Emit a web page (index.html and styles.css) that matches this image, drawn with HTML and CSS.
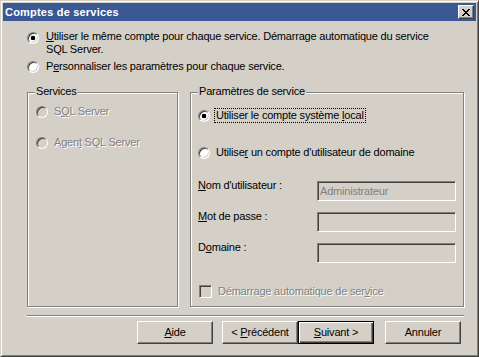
FILE: index.html
```html
<!DOCTYPE html>
<html lang="fr">
<head>
<meta charset="utf-8">
<title>Comptes de services</title>
<link rel="stylesheet" href="styles.css">
</head>
<body>
<div class="window">
  <div class="titlebar">
    <span class="title">Comptes de services</span>
    <span class="close-btn">
      <svg width="8" height="7" viewBox="0 0 8 7" shape-rendering="crispEdges"><path fill="#000" d="M0 0h2v1H0z M6 0h2v1H6z M1 1h2v1H1z M5 1h2v1H5z M2 2h4v1H2z M3 3h2v1H3z M2 4h4v1H2z M1 5h2v1H1z M5 5h2v1H5z M0 6h2v1H0z M6 6h2v1H6z"/></svg>
    </span>
  </div>
  <div class="body">
    <div class="option first">
      <span class="radio checked"></span>
      <span class="label"><u>U</u>tiliser le même compte pour chaque service. Démarrage automatique du service<br>SQL Server.</span>
    </div>
    <div class="option second">
      <span class="radio"></span>
      <span class="label">P<u>e</u>rsonnaliser les paramètres pour chaque service.</span>
    </div>
    <div class="groups">
      <div class="group services">
        <span class="legend">Services</span>
        <div class="svc-row disabled"><span class="radio off"></span><span>S<u>Q</u>L Server</span></div>
        <div class="svc-row disabled"><span class="radio off"></span><span>Agen<u>t</u> SQL Server</span></div>
      </div>
      <div class="group params">
        <span class="legend">Paramètres de service</span>
        <div class="prm-radio local"><span class="radio checked"></span><span class="focus">Utiliser le compte système <u>l</u>ocal</span></div>
        <div class="prm-radio domain"><span class="radio"></span><span>Utilise<u>r</u> un compte d'utilisateur de domaine</span></div>
        <div class="field first-field"><span class="field-label"><u>N</u>om d'utilisateur :</span><span class="textbox">Administrateur</span></div>
        <div class="field"><span class="field-label"><u>M</u>ot de passe :</span><span class="textbox"></span></div>
        <div class="field"><span class="field-label">D<u>o</u>maine :</span><span class="textbox"></span></div>
        <div class="check-row disabled"><span class="checkbox"></span><span>Démarrage automatique de ser<u>v</u>ice</span></div>
      </div>
    </div>
    <div class="separator"></div>
    <div class="buttons">
      <button class="btn"><u>A</u>ide</button>
      <button class="btn back">&lt; <u>P</u>récédent</button>
      <button class="btn default"><u>S</u>uivant &gt;</button>
      <button class="btn cancel">Annuler</button>
    </div>
  </div>
</div>
</body>
</html>
```
FILE: styles.css
```css
* { box-sizing: border-box; }
html, body { margin: 0; padding: 0; }
body {
  width: 479px;
  height: 357px;
  overflow: hidden;
  background: #d4d0c8;
  font-family: "Liberation Sans", Arial, sans-serif;
  font-size: 11px;
  line-height: 13px;
  letter-spacing: -0.2px;
  color: #000;
}
.window {
  width: 479px;
  height: 357px;
  background: #d4d0c8;
  border: 1px solid;
  border-color: #d4d0c8 #404040 #404040 #d4d0c8;
  box-shadow: inset 1px 1px 0 #fff, inset -1px -1px 0 #808080;
  padding: 2px;
  display: flex;
  flex-direction: column;
}
.titlebar {
  height: 18px;
  flex: none;
  background: #3a5894;
  display: flex;
  align-items: center;
  justify-content: space-between;
  padding: 0 2px;
}
.title {
  color: #fff;
  font-weight: bold;
  letter-spacing: 0.2px;
  line-height: 18px;
}
.close-btn {
  width: 16px;
  height: 14px;
  background: #d4d0c8;
  border: 1px solid;
  border-color: #fff #404040 #404040 #fff;
  box-shadow: inset -1px -1px 0 #808080;
  display: flex;
  align-items: center;
  justify-content: center;
}
.close-btn svg { display: block; }
.body {
  flex: 1;
  padding: 9px 0 0 24px;
}
.option { display: flex; align-items: flex-start; }
.option .radio { margin: 2px 7px 0 0; }
.option.second { margin-top: 4px; align-items: center; }
.option.second .radio { margin-top: 0; }

.radio {
  width: 12px;
  height: 12px;
  flex: none;
  border-radius: 50%;
  border: 1px solid;
  border-color: #808080 #fff #fff #808080;
  box-shadow: inset 1px 1px 0 #404040, inset -1px -1px 0 #d4d0c8;
  background: #fff;
}
.radio.checked { background: radial-gradient(circle at 50% 50%, #000 0 2px, #fff 2.6px); }
.radio.off { background: #d4d0c8; }

.groups { display: flex; gap: 12px; margin-top: 19px; }
.group {
  height: 215px;
  border: 1px solid #808080;
  box-shadow: inset 1px 1px 0 #fff, 1px 1px 0 #fff;
}
.services { width: 151px; }
.params { width: 274px; }
.legend {
  display: block;
  width: fit-content;
  margin: -8px 0 0 7px;
  padding: 0 1px;
  background: #d4d0c8;
}
.disabled { color: #808080; text-shadow: 1px 1px 0 #fff; }

.svc-row { display: flex; align-items: center; margin: 7px 0 0 8px; }
.svc-row + .svc-row { margin-top: 18px; }
.svc-row .radio { margin-right: 6px; }

.prm-radio { display: flex; align-items: center; margin-left: 7px; }
.prm-radio .radio { margin-right: 6px; }
.prm-radio.local { margin-top: 11px; }
.prm-radio.local .radio { margin-right: 5px; }
.prm-radio.domain { margin-top: 24px; }
.focus { outline: 1px dotted #000; padding: 0 1px; }

.field { display: flex; align-items: flex-start; margin: 11px 0 0 7px; }
.field.first-field { margin-top: 22px; }
.field-label { width: 119px; flex: none; margin-top: -2px; }
.textbox {
  width: 139px;
  height: 20px;
  border: 1px solid;
  border-color: #808080 #fff #fff #808080;
  box-shadow: inset 1px 1px 0 #404040, inset -1px -1px 0 #d4d0c8;
  background: #d4d0c8;
  color: #808080;
  padding: 2px 2px;
  line-height: 14px;
}
.check-row { display: flex; align-items: center; margin: 22px 0 0 8px; }
.checkbox {
  width: 13px;
  height: 13px;
  flex: none;
  margin-right: 6px;
  border: 1px solid;
  border-color: #808080 #fff #fff #808080;
  box-shadow: inset 1px 1px 0 #404040, inset -1px -1px 0 #d4d0c8;
  background: #d4d0c8;
}

.separator {
  width: 437px;
  height: 2px;
  margin-top: 8px;
  border-top: 1px solid #808080;
  border-bottom: 1px solid #fff;
}
.buttons { display: flex; margin: 4px 0 0 110px; }
.btn {
  width: 76px;
  height: 23px;
  padding: 0;
  font: inherit;
  letter-spacing: inherit;
  line-height: 13px;
  color: #000;
  background: #d4d0c8;
  border: 1px solid;
  border-color: #fff #404040 #404040 #fff;
  box-shadow: inset -1px -1px 0 #808080, inset 1px 1px 0 #d4d0c8;
}
.btn.back { margin-left: 9px; }
.btn.default {
  border-color: #000;
  box-shadow: inset 1px 1px 0 #fff, inset -1px -1px 0 #404040, inset -2px -2px 0 #808080;
}
.btn.cancel { margin-left: 11px; }
```
